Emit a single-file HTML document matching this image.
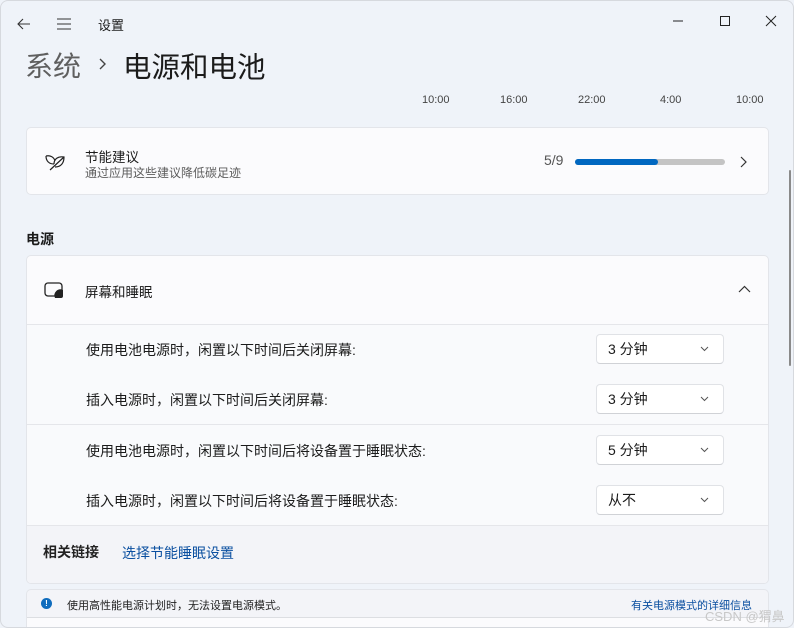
<!DOCTYPE html>
<html style="overflow:hidden;height:628px"><head><meta charset="utf-8"><style>
*{box-sizing:border-box;margin:0;padding:0}
body{width:794px;height:628px;overflow:hidden;background:#eff3f9;font-family:"Liberation Sans","Noto Sans CJK SC",sans-serif;color:#1b1b1b;position:relative;font-size:13px}
.a{position:absolute}
.card{position:absolute;left:26px;width:743px;background:#fbfbfd;border:1px solid #e3e5ea;border-radius:5px}
.dd{position:absolute;left:596px;width:128px;height:30px;background:#fff;border:1px solid #e0e2e6;border-bottom-color:#d0d2d6;border-radius:4px;font-size:14px;padding:4px 0 0 11px}
.dd svg{position:absolute;right:14px;top:11px}
.lbl{position:absolute;left:86px;font-size:14px}
</style></head><body>
<div class="a" style="left:0;top:0;width:794px;height:628px;border:1px solid #d6d9de;border-radius:8px;pointer-events:none;z-index:5"></div>
<svg class="a" style="left:17px;top:17px" width="14" height="14" viewBox="0 0 14 14"><path d="M6 2L1 7l5 5M1 7h12" stroke="#333" fill="none" stroke-width="1.1"/></svg>
<svg class="a" style="left:56px;top:17px" width="16" height="14" viewBox="0 0 16 14"><path d="M1 2h14M1 7h14M1 12h14" stroke="#333" stroke-width="1.1"/></svg>
<div class="a" style="left:98px;top:15px;font-size:13px">设置</div>
<svg class="a" style="left:672px;top:15px" width="110" height="12" viewBox="0 0 110 12"><path d="M1 6h10" stroke="#222"/><path d="M48.5 1.5h9v9h-9z" stroke="#222" fill="none"/><path d="M94 1l10 10M104 1l-10 10" stroke="#222"/></svg>
<div class="a" style="left:25px;top:45px;font-size:28px;color:#5f5f5f">系统</div>
<svg class="a" style="left:98px;top:58px" width="10" height="12" viewBox="0 0 10 12"><path d="M2 1l5 5-5 5" stroke="#444" fill="none" stroke-width="1.4"/></svg>
<div class="a" style="left:123px;top:45px;font-size:28.5px;color:#1b1b1b">电源和电池</div>
<div class="a" style="top:94px;left:422px;font-size:11px;color:#444;width:350px">
<span class="a" style="left:0">10:00</span><span class="a" style="left:78px">16:00</span><span class="a" style="left:156px">22:00</span><span class="a" style="left:238px">4:00</span><span class="a" style="left:314px">10:00</span></div>
<div class="card" style="top:127px;height:68px">
<svg class="a" style="left:17px;top:24px" width="22" height="20" viewBox="0 0 22 20"><path d="M2 4c4-1 8 1 9 5M2 4c0 5 3 8 8 8M10 12c0-5 4-8 10-7 0 6-3 10-9 10M20 5l-14 13" stroke="#222" fill="none" stroke-width="1.2"/></svg>
<div class="a" style="left:58px;top:18px;font-size:13.5px">节能建议</div>
<div class="a" style="left:58px;top:36px;font-size:12px;color:#5d5d5d">通过应用这些建议降低碳足迹</div>
<div class="a" style="left:517px;top:24px;font-size:14px;color:#555">5/9</div>
<div class="a" style="left:548px;top:31px;width:150px;height:6px;border-radius:3px;background:#c4c4c4"><div style="width:83px;height:6px;border-radius:3px;background:#0067c0"></div></div>
<svg class="a" style="left:713px;top:28px" width="8" height="12" viewBox="0 0 8 12"><path d="M1 1l5 5-5 5" stroke="#333" fill="none" stroke-width="1.2"/></svg>
</div>
<div class="a" style="left:26px;top:229px;font-size:14px;font-weight:bold">电源</div>
<div class="card" style="top:255px;height:329px;overflow:hidden">
<svg class="a" style="left:17px;top:26px" width="20" height="17" viewBox="0 0 20 17"><rect x="1" y="1" width="17" height="13" rx="3" stroke="#222" fill="none" stroke-width="1.3"/><path d="M19 8a6 6 0 0 0-8 8h6a2 2 0 0 0 2-2z" fill="#222"/></svg>
<div class="a" style="left:58px;top:25px;font-size:13.5px">屏幕和睡眠</div>
<svg class="a" style="left:711px;top:29px" width="13" height="8" viewBox="0 0 13 8"><path d="M1 7l5.5-5.5L12 7" stroke="#333" fill="none" stroke-width="1.2"/></svg>
<div class="a" style="left:0;top:68px;width:743px;height:1px;background:#e5e6ea"></div>
<div class="a" style="left:0;top:69px;width:743px;height:201px;background:#f9fafc"></div>
<div class="a" style="left:0;top:168px;width:743px;height:1px;background:#e5e6ea"></div>
<div class="a" style="left:0;top:269px;width:743px;height:1px;background:#e5e6ea"></div>
<div class="a" style="left:0;top:270px;width:743px;height:60px;background:#f3f4f8"></div>
<div class="a" style="left:16px;top:286px;font-size:14px;font-weight:bold;color:#222">相关链接</div>
<div class="a" style="left:95px;top:287px;font-size:14px;color:#0a4fa0">选择节能睡眠设置</div>
</div>
<div class="lbl" style="top:340px">使用电池电源时，闲置以下时间后关闭屏幕:</div>
<div class="lbl" style="top:390px">插入电源时，闲置以下时间后关闭屏幕:</div>
<div class="lbl" style="top:441px">使用电池电源时，闲置以下时间后将设备置于睡眠状态:</div>
<div class="lbl" style="top:491px">插入电源时，闲置以下时间后将设备置于睡眠状态:</div>
<div class="dd" style="top:334px">3 分钟<svg width="9" height="6" viewBox="0 0 9 6"><path d="M1 1l3.5 3.5L8 1" stroke="#555" fill="none"/></svg></div>
<div class="dd" style="top:384px">3 分钟<svg width="9" height="6" viewBox="0 0 9 6"><path d="M1 1l3.5 3.5L8 1" stroke="#555" fill="none"/></svg></div>
<div class="dd" style="top:435px">5 分钟<svg width="9" height="6" viewBox="0 0 9 6"><path d="M1 1l3.5 3.5L8 1" stroke="#555" fill="none"/></svg></div>
<div class="dd" style="top:485px">从不<svg width="9" height="6" viewBox="0 0 9 6"><path d="M1 1l3.5 3.5L8 1" stroke="#555" fill="none"/></svg></div>
<div class="card" style="top:589px;height:39px;background:#f3f4f8;overflow:hidden;border-bottom:none;border-radius:5px 5px 0 0">
<div class="a" style="left:14px;top:8px;width:11px;height:11px;border-radius:50%;background:#0f6cbd;color:#fff;font-size:8px;text-align:center;line-height:11px;font-weight:bold">!</div>
<div class="a" style="left:40px;top:7px;font-size:11px;color:#222">使用高性能电源计划时，无法设置电源模式。</div>
<div class="a" style="left:604px;top:7px;font-size:11px;color:#0a4fa0">有关电源模式的详细信息</div>
<div class="a" style="left:0;top:27px;width:743px;height:1px;background:#dcdee2"></div>
<div class="a" style="left:0;top:28px;width:743px;height:20px;background:#fbfbfd"></div>
</div>
<div class="a" style="left:705px;top:606px;font-size:13px;color:#c8c8c8">CSDN @猬鼻</div>
<div class="a" style="left:789px;top:170px;width:2px;height:196px;background:#8a8a8a;border-radius:1px"></div>
</body></html>
